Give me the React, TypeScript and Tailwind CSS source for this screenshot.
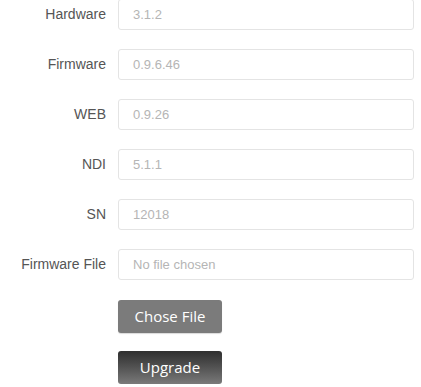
import React from "react";

const rows = [
  ["Hardware", "3.1.2"],
  ["Firmware", "0.9.6.46"],
  ["WEB", "0.9.26"],
  ["NDI", "5.1.1"],
  ["SN", "12018"],
  ["Firmware File", "No file chosen"],
];

export default function App() {
  return (
    <div className="w-[421px] h-[387px] bg-white overflow-hidden" style={{ fontFamily: '"Liberation Sans", Arial, sans-serif' }}>
      <div className="flex flex-col gap-[19px] mt-[-1px]">
        {rows.map(([label, value]) => (
          <div key={label} className="flex items-center">
            <div className="w-[106px] text-right text-[14px] text-[#555] pr-0">{label}</div>
            <div className="ml-[12px] w-[296px] h-[31px] border border-[#e4e4e4] rounded-[3px] flex items-center pl-[14px] text-[13px] text-[#b5b5b5]">
              {value}
            </div>
          </div>
        ))}
      </div>
      <div className="ml-[118px] mt-[20px] flex flex-col gap-[18px]">
        <button
          className="w-[104px] h-[33px] rounded-[3px] bg-[#7b7b7b] text-white text-[15px] shadow-[0_1px_1px_rgba(0,0,0,0.15)]"
          style={{ fontFamily: '"Open Sans", "Noto Sans", sans-serif' }}
        >
          Chose File
        </button>
        <button
          className="w-[104px] h-[33px] rounded-[3px] bg-gradient-to-b from-[#2f2f2f] to-[#7a7a7a] text-white text-[15px]"
          style={{ fontFamily: '"Open Sans", "Noto Sans", sans-serif' }}
        >
          Upgrade
        </button>
      </div>
    </div>
  );
}
